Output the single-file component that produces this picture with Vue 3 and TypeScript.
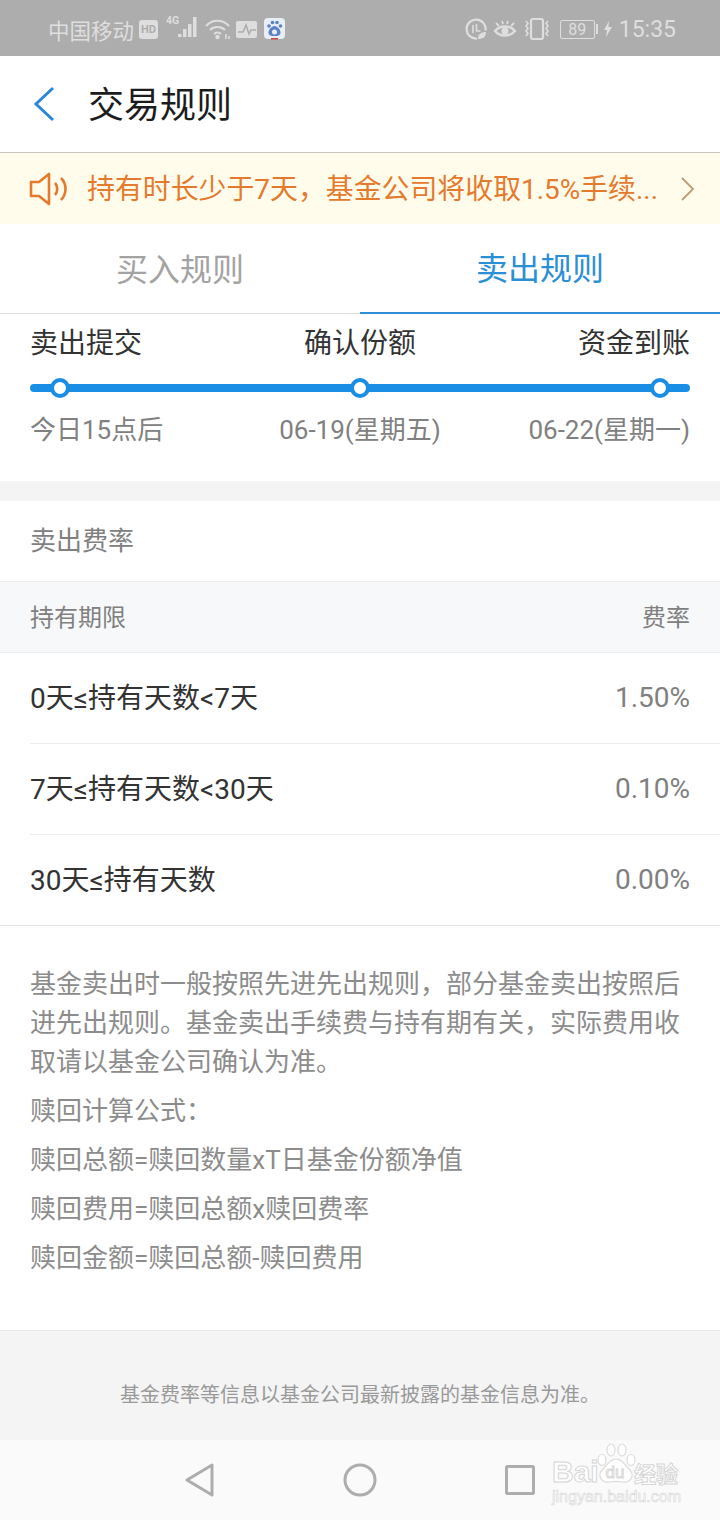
<script setup lang="ts">
type FeeRow = { term: string; rate: string }

const steps = [
  { title: '卖出提交', date: '今日15点后' },
  { title: '确认份额', date: '06-19(星期五)' },
  { title: '资金到账', date: '06-22(星期一)' },
]

const feeRows: FeeRow[] = [
  { term: '0天≤持有天数<7天', rate: '1.50%' },
  { term: '7天≤持有天数<30天', rate: '0.10%' },
  { term: '30天≤持有天数', rate: '0.00%' },
]

const formulas = ['赎回计算公式：', '赎回总额=赎回数量xT日基金份额净值', '赎回费用=赎回总额x赎回费率', '赎回金额=赎回总额-赎回费用']
</script>

<template>
  <div class="page">
    <div class="status-bar">
      <div class="status-left">
        <span class="carrier">中国移动</span>
        <span class="hd">HD</span>
        <svg width="32" height="24" viewBox="0 0 32 24" class="signal">
          <text x="0" y="9" font-size="10.500" font-weight="700" fill="#dedede" font-family="Roboto, sans-serif">4G</text>
          <rect x="12" y="19" width="3.500" height="3" fill="#dedede" />
          <rect x="17" y="14" width="3.500" height="8" fill="#dedede" />
          <rect x="22" y="9" width="3.500" height="13" fill="#dedede" />
          <rect x="27" y="2" width="3.500" height="20" fill="#dedede" />
        </svg>
        <svg width="26" height="22" viewBox="0 0 26 22" class="wifi" fill="none" stroke="#dedede" stroke-width="2.200">
          <path d="M1 8c6-7 17-7 23 0" />
          <path d="M5 12c4-4 11-4 15 0" />
          <path d="M9 16c2-2 5-2 7 0" />
          <circle cx="12.500" cy="19" r="2.200" fill="#dedede" stroke="none" />
          <path d="M21 16v5M24 18v3" stroke-width="1.600" />
        </svg>
        <svg width="21" height="17" viewBox="0 0 21 17" class="pulse">
          <rect width="21" height="17" rx="2" fill="#dedede" />
          <path d="M2 11h5l3-7 3 9 2-4h5" fill="none" stroke="#adadad" stroke-width="1.600" />
        </svg>
        <svg width="21" height="22" viewBox="0 0 21 22" class="paw">
          <rect width="21" height="21" rx="4" fill="#e8edf6" />
          <g fill="#5b82c9">
            <circle cx="5" cy="8" r="1.800" />
            <circle cx="8.500" cy="4.500" r="1.800" />
            <circle cx="13" cy="4.500" r="1.800" />
            <circle cx="16.500" cy="8" r="1.800" />
            <path d="M10.500 8c-3 0-6 4-6 6.500 0 3 3 3.500 6 3.500s6-.5 6-3.500C16.500 12 13.500 8 10.500 8z" />
          </g>
          <circle cx="10.500" cy="14" r="2.500" fill="#e8edf6" />
          <rect x="7" y="20" width="7" height="1.500" fill="#c4443c" />
        </svg>
      </div>
      <div class="status-right">
        <svg width="22" height="22" viewBox="0 0 22 22" fill="none" stroke="#dedede" stroke-width="2.200">
          <path d="M12 20.500a9.500 9.500 0 1 1 8.500-8" />
          <path d="M8 7v8M11.500 6v7h4" stroke-width="1.600" />
          <path d="M13 21c0-5 3-7 8-7 0 5-3 7-8 7z" fill="#dedede" stroke="none" />
        </svg>
        <svg width="24" height="20" viewBox="0 0 24 20" fill="none" stroke="#dedede" stroke-width="2.400">
          <path d="M2 12c5-6 15-6 20 0-5 6-15 6-20 0z" />
          <circle cx="12" cy="12" r="3.500" fill="#dedede" stroke="none" />
          <path d="M3 4l3 3M21 4l-3 3M9 2l1 3M15 2l-1 3" stroke-width="1.800" />
        </svg>
        <svg width="28" height="22" viewBox="0 0 28 22" fill="none" stroke="#dedede" stroke-width="2.200">
          <rect x="8" y="1" width="12" height="20" rx="2" />
          <path d="M3 3l2 2.500-2 2.500 2 2.500-2 2.500 2 2.500-2 2.500M25 3l-2 2.500 2 2.500-2 2.500 2 2.500-2 2.500 2 2.500" stroke-width="1.600" />
        </svg>
        <span class="battery">89</span>
        <span class="battery-tip"></span>
        <svg width="8" height="16" viewBox="0 0 8 16" class="bolt"><path d="M5 0L0 9h3l-1 7 6-10H4.500z" fill="#dedede" /></svg>
        <span class="clock">15:35</span>
      </div>
    </div>

    <header class="nav">
      <svg width="24" height="36" viewBox="0 0 24 36" fill="none" stroke="#2b86dc" stroke-width="3">
        <path d="M21 2L4 18l17 16" />
      </svg>
      <h1>交易规则</h1>
    </header>

    <div class="notice">
      <svg width="40" height="34" viewBox="0 0 40 34" fill="none" stroke="#e57a2c" stroke-width="2.600">
        <path d="M2 10h8L20 2v30L10 24H2z" stroke-linejoin="round" />
        <path d="M26 11c3 3 3 9 0 12M32 6c6 6 6 16 0 22" />
      </svg>
      <span class="notice-text">持有时长少于7天，基金公司将收取1.5%手续...</span>
      <svg width="14" height="24" viewBox="0 0 14 24" fill="none" stroke="#c09a70" stroke-width="1.800">
        <path d="M2 1l11 11L2 23" />
      </svg>
    </div>

    <div class="tabs">
      <div class="tab">买入规则</div>
      <div class="tab active">卖出规则</div>
    </div>

    <section class="steps">
      <div class="step-row titles">
        <span v-for="s in steps" :key="s.title">{{ s.title }}</span>
      </div>
      <div class="track">
        <i class="dot"></i>
        <i class="dot"></i>
        <i class="dot"></i>
      </div>
      <div class="step-row dates">
        <span v-for="s in steps" :key="s.date">{{ s.date }}</span>
      </div>
    </section>

    <section class="fees">
      <div class="fees-title">卖出费率</div>
      <div class="fees-head">
        <span>持有期限</span>
        <span>费率</span>
      </div>
      <div class="fees-rows">
        <div v-for="row in feeRows" :key="row.term" class="fee-row">
          <span class="term">{{ row.term }}</span>
          <span class="rate">{{ row.rate }}</span>
        </div>
      </div>
    </section>

    <section class="notes">
      <p>基金卖出时一般按照先进先出规则，部分基金卖出按照后进先出规则。基金卖出手续费与持有期有关，实际费用收取请以基金公司确认为准。</p>
      <p v-for="line in formulas" :key="line">{{ line }}</p>
    </section>

    <footer class="disclaimer">基金费率等信息以基金公司最新披露的基金信息为准。</footer>

    <nav class="sys-nav">
      <svg width="30" height="34" viewBox="0 0 30 34" fill="none" stroke="#adadad" stroke-width="3" stroke-linejoin="round">
        <path d="M27 2v30L2 17z" />
      </svg>
      <svg width="34" height="34" viewBox="0 0 34 34" fill="none" stroke="#adadad" stroke-width="3">
        <circle cx="17" cy="17" r="15" />
      </svg>
      <svg width="30" height="30" viewBox="0 0 30 30" fill="none" stroke="#adadad" stroke-width="3" stroke-linejoin="round">
        <rect x="1.500" y="1.500" width="27" height="27" rx="1" />
      </svg>
      <div class="watermark">
        <svg width="40" height="42" viewBox="0 0 40 42" class="wm-paw" fill="#fff" stroke="#dcdcdc" stroke-width="1.200">
          <ellipse cx="6" cy="17" rx="4" ry="5.500" />
          <ellipse cx="15" cy="7" rx="4" ry="6" />
          <ellipse cx="26" cy="7" rx="4" ry="6" />
          <ellipse cx="35" cy="17" rx="4" ry="5.500" />
          <path d="M20 16c-6 0-9 6-14 11-5 6 0 13 7 12 5-1 9-1 14 0 7 1 12-6 7-12-5-5-8-11-14-11z" />
        </svg>
        <div class="wm-main">
          <span class="wm-bai">Bai</span>
          <span class="wm-du">du</span>
          <span class="wm-cn">经验</span>
        </div>
        <div class="wm-sub">jingyan.baidu.com</div>
      </div>
    </nav>
  </div>
</template>

<style scoped>
.page {
  width: 720px;
  height: 1520px;
  overflow: hidden;
  display: flex;
  flex-direction: column;
  background: #fff;
  font-family: Roboto, 'Noto Sans CJK SC', sans-serif;
  color: #333;
}

.status-bar {
  height: 56px;
  flex-shrink: 0;
  background: #adadad;
  color: #dedede;
  display: flex;
  justify-content: space-between;
  align-items: center;
  padding: 2px 44px 0 48px;
  box-sizing: border-box;
}

.status-left,
.status-right {
  display: flex;
  align-items: center;
}

.carrier {
  font-size: 21.500px;
}

.hd {
  width: 19px;
  height: 19px;
  margin-left: 5px;
  border-radius: 3px;
  background: #dedede;
  color: #adadad;
  font-size: 11px;
  font-weight: 700;
  line-height: 19px;
  text-align: center;
}

.signal {
  margin: -4px 0 0 8px;
}

.wifi {
  margin-left: 7px;
}

.pulse {
  margin-left: 5px;
}

.paw {
  margin-left: 7px;
}

.status-right svg + svg {
  margin-left: 6px;
}

.battery {
  width: 33px;
  height: 17px;
  margin-left: 9px;
  border: 1px solid #dedede;
  border-radius: 2px;
  font-size: 16px;
  line-height: 17px;
  text-align: center;
}

.battery-tip {
  width: 2px;
  height: 10px;
  margin-left: 1px;
  background: #dedede;
}

.status-right .bolt {
  margin-left: 6px;
}

.clock {
  margin-left: 7px;
  font-size: 23px;
}

.nav {
  height: 97px;
  flex-shrink: 0;
  display: flex;
  align-items: center;
  padding-left: 32px;
  box-sizing: border-box;
  border-bottom: 1px solid #c8c5bf;
}

.nav h1 {
  margin: 0 0 5px 32px;
  font-size: 36px;
  font-weight: 400;
  color: #1c1c1c;
}

.notice {
  height: 71px;
  flex-shrink: 0;
  display: flex;
  align-items: center;
  padding: 0 26px 0 29px;
  box-sizing: border-box;
  background: #fffcec;
}

.notice-text {
  flex: 1;
  margin: 0 0 4px 18px;
  font-size: 27.900px;
  color: #e57a2c;
  white-space: nowrap;
}

.tabs {
  height: 90px;
  flex-shrink: 0;
  display: flex;
  box-sizing: border-box;
  border-bottom: 1px solid #dcdcdc;
}

.tab {
  flex: 1;
  display: flex;
  align-items: center;
  justify-content: center;
  padding-bottom: 4px;
  font-size: 32px;
  color: #a3a3a3;
}

.tab.active {
  height: 90px;
  box-sizing: border-box;
  color: #2a8fd4;
  border-bottom: 2px solid #2a8fd4;
}

.steps {
  height: 167px;
  flex-shrink: 0;
  padding: 0 30px;
  box-sizing: border-box;
}

.step-row {
  display: grid;
  grid-template-columns: 1fr auto 1fr;
}

.step-row span:last-child {
  text-align: right;
}

.titles {
  height: 58px;
  box-sizing: border-box;
  padding-bottom: 4px;
  align-items: center;
  font-size: 28px;
  color: #333;
}

.track {
  height: 8px;
  margin-top: 12px;
  padding: 0 20px;
  border-radius: 4px;
  background: #1a8de4;
  display: flex;
  justify-content: space-between;
  align-items: center;
}

.dot {
  width: 20px;
  height: 20px;
  box-sizing: border-box;
  border: 4px solid #1a8de4;
  border-radius: 50%;
  background: #fff;
}

.dates {
  margin-top: 18px;
  font-size: 26px;
  line-height: 40px;
  color: #808080;
}

.fees {
  flex-shrink: 0;
  border-top: 20px solid #f4f4f4;
}

.fees-title {
  height: 81px;
  box-sizing: border-box;
  display: flex;
  align-items: center;
  padding: 0 0 6px 30px;
  font-size: 26px;
  color: #808080;
  border-bottom: 1px solid #ececec;
}

.fees-head {
  height: 71px;
  box-sizing: border-box;
  display: flex;
  justify-content: space-between;
  align-items: center;
  padding: 0 30px 4px;
  font-size: 24px;
  color: #808080;
  background: #f7f8fa;
  border-bottom: 1px solid #ececec;
}

.fees-rows {
  padding-left: 30px;
  border-bottom: 1px solid #e4e4e4;
}

.fee-row {
  height: 91px;
  box-sizing: border-box;
  display: flex;
  justify-content: space-between;
  align-items: center;
  padding-right: 30px;
  border-bottom: 1px solid #ececec;
}

.fee-row:last-child {
  height: 90px;
  border-bottom: 0;
}

.term {
  margin-bottom: 4px;
  font-size: 28px;
  color: #333;
}

.rate {
  margin-bottom: 2px;
  font-size: 28px;
  color: #808080;
}

.notes {
  flex: 1;
  padding: 39px 30px 0;
  font-size: 26px;
  line-height: 39px;
  color: #8c8c8c;
}

.notes p {
  margin: 0 0 10px;
}

.disclaimer {
  height: 110px;
  flex-shrink: 0;
  display: flex;
  align-items: center;
  justify-content: center;
  box-sizing: border-box;
  padding-top: 16px;
  font-size: 20px;
  color: #999;
  background: #f4f4f4;
  border-top: 1px solid #e8e8e8;
}

.sys-nav {
  position: relative;
  height: 80px;
  flex-shrink: 0;
  display: flex;
  align-items: center;
  padding-left: 185px;
  background: #fafafa;
}

.sys-nav svg:nth-child(2) {
  margin-left: 128px;
}

.sys-nav svg:nth-child(3) {
  margin-left: 128px;
}

/* watermark sits on top of the nav bar */
.watermark {
  position: absolute;
  left: 552px;
  top: 3px;
  width: 130px;
  color: #fff;
  -webkit-text-stroke: 1px #d6d6d6;
}

.watermark .wm-paw {
  position: absolute;
  left: 44px;
  top: 0;
}

.wm-main {
  position: relative;
  height: 26px;
  margin-top: 16px;
  display: flex;
  align-items: center;
  font-family: 'Liberation Sans', 'Noto Sans CJK SC', sans-serif;
  white-space: nowrap;
}

.wm-bai {
  width: 44px;
  font-size: 30px;
  font-weight: 700;
}

.wm-du {
  width: 38px;
  padding-top: 2px;
  font-size: 17px;
  text-align: center;
}

.wm-cn {
  font-size: 22px;
  font-weight: 700;
}

.wm-sub {
  margin-top: 3px;
  font-family: 'Liberation Sans', sans-serif;
  font-size: 16px;
  line-height: 18px;
  white-space: nowrap;
  -webkit-text-stroke: 0.6px #d6d6d6;
}
</style>
